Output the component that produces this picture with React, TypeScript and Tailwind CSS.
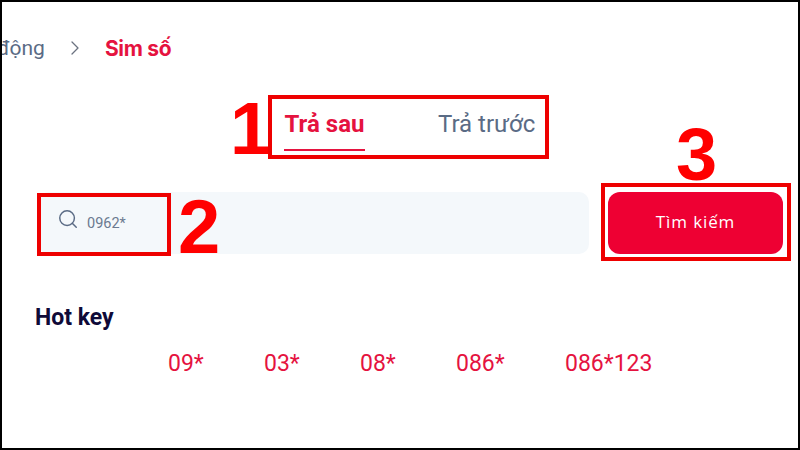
import { ChevronRight, Search } from 'lucide-react';

const hotKeys = [
  { label: '09*', className: 'w-[96px]' },
  { label: '03*', className: 'w-[96px]' },
  { label: '08*', className: 'w-[96px]' },
  { label: '086*', className: 'w-[109px]' },
  { label: '086*123', className: '' },
];

export default function App() {
  return (
    <div className="relative w-[800px] h-[450px] overflow-hidden bg-white border-2 border-black font-['Roboto',sans-serif]">
      {/* Breadcrumb */}
      <div className="flex items-center h-[28px] mt-[32px] -ml-[5px]">
        <span className="text-[21px] leading-none text-[#5a6b85]">động</span>
        <ChevronRight className="w-[24px] h-[24px] ml-[18px] text-[#6b7280]" strokeWidth={1.3} />
        <span className="ml-[18px] text-[21px] leading-none font-bold text-[#e5133f] font-['Inter',sans-serif] tracking-[-0.3px]">Sim số</span>
      </div>

      {/* Tabs */}
      <div className="flex mt-[36px] ml-[282px] h-[54px]">
        <div className="w-[81px] h-[53px] flex flex-col items-center border-b-2 border-[#e5133f]">
          <span className="text-[24px] leading-[52px] font-bold text-[#e5133f] whitespace-nowrap">Trả sau</span>
        </div>
        <span className="ml-[73px] text-[24px] leading-[52px] text-[#5a6b85] whitespace-nowrap">Trả trước</span>
      </div>

      {/* Search row */}
      <div className="flex items-center mt-[40px] ml-[37px]">
        <div className="w-[550px] h-[62px] rounded-[10px] bg-[#f4f8fb] flex items-center pl-[18px]">
          <Search className="w-[22px] h-[22px] text-[#5a6b85] -mt-[8px]" strokeWidth={1.6} />
          <span className="ml-[8px] mt-[1px] text-[14.5px] text-[#6b7a90]">0962*</span>
        </div>
        <button className="ml-[19px] w-[175px] h-[62px] rounded-[12px] bg-[#ee0033] text-white text-[17px] tracking-[0.9px] pb-[2px] font-['Open_Sans',sans-serif]">
          Tìm kiếm
        </button>
      </div>

      {/* Hot key */}
      <div className="mt-[49px] ml-[33px] text-[23px] leading-[30px] font-bold text-[#0f0a38]">Hot key</div>
      <div className="flex mt-[16px] ml-[166px]">
        {hotKeys.map((key) => (
          <span key={key.label} className={`text-[23px] leading-[30px] text-[#e5133f] ${key.className}`}>
            {key.label}
          </span>
        ))}
      </div>

      {/* Annotations drawn over the page */}
      <span className="absolute left-[228px] top-[85px] text-[74px] leading-[84px] font-bold text-[#ff0000] font-['Liberation_Sans',sans-serif]">1</span>
      <div className="absolute left-[266px] top-[93px] w-[281px] h-[64px] border-[4px] border-[#ee0000]" />
      <span className="absolute left-[176px] top-[183px] text-[76px] leading-[84px] font-bold text-[#ff0000] font-['Liberation_Sans',sans-serif]">2</span>
      <div className="absolute left-[35px] top-[191px] w-[134px] h-[63px] border-[4px] border-[#ee0000]" />
      <span className="absolute left-[674px] top-[111px] text-[74px] leading-[84px] font-bold text-[#ff0000] font-['Liberation_Sans',sans-serif]">3</span>
      <div className="absolute left-[599px] top-[181px] w-[190px] h-[78px] border-[4px] border-[#ee0000]" />
    </div>
  );
}
